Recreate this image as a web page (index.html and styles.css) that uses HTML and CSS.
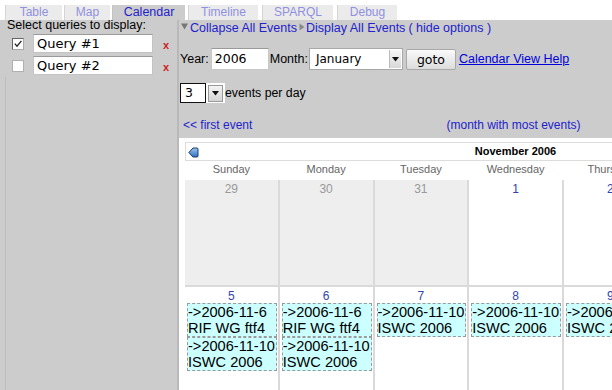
FILE: index.html
```html
<!DOCTYPE html>
<html>
<head>
<meta charset="utf-8">
<link rel="stylesheet" href="styles.css">
</head>
<body>
<div class="tabs">
  <div class="tab w-table">Table</div>
  <div class="tab w-map">Map</div>
  <div class="tab active w-cal">Calendar</div>
  <div class="tab w-time">Timeline</div>
  <div class="tab w-sparql">SPARQL</div>
  <div class="tab w-debug">Debug</div>
</div>
<div class="main">
  <div class="side">
    <div class="side-title">Select queries to display:</div>
    <div class="qrow first">
      <span class="cb checked"><svg width="10" height="10" viewBox="0 0 10 10"><path d="M1.8 4.6 L4 7.2 L8.4 1.8" fill="none" stroke="#222" stroke-width="1.3"/></svg></span>
      <div class="qinput">Query #1</div>
      <span class="del">x</span>
    </div>
    <div class="qrow">
      <span class="cb"></span>
      <div class="qinput">Query #2</div>
      <span class="del">x</span>
    </div>
    <div class="side-list"></div>
  </div>
  <div class="content">
    <div class="options">
      <div class="toggles">
        <svg class="tri-down" width="7" height="7" viewBox="0 0 7 7"><polygon points="0,0.5 7,0.5 3.5,6.5" fill="#777"/></svg>
        <span class="lnk">Collapse All Events</span>
        <svg class="tri-right" width="6" height="8" viewBox="0 0 6 8"><polygon points="0.5,0.5 5.5,4 0.5,7.5" fill="#888"/></svg>
        <span class="lnk">Display All Events</span>
        <span class="lnk gap">( hide options )</span>
      </div>
      <div class="form-row">
        <span class="lbl">Year:</span>
        <div class="year-input">2006</div>
        <span class="lbl month-lbl">Month:</span>
        <div class="select month-select">
          <span class="sel-text">January</span>
          <span class="sel-btn"><svg width="7" height="5" viewBox="0 0 7 5"><polygon points="0,0 7,0 3.5,4.5" fill="#111"/></svg></span>
        </div>
        <div class="goto">goto</div>
        <span class="help">Calendar View Help</span>
      </div>
      <div class="epd-row">
        <div class="epd-select">
          <span class="epd-text">3</span>
          <span class="epd-btn"><svg width="7" height="5" viewBox="0 0 7 5"><polygon points="0,0 7,0 3.5,4.5" fill="#111"/></svg></span>
        </div>
        <span class="epd-lbl">events per day</span>
      </div>
      <div class="nav-row">
        <span class="lnk">&lt;&lt; first event</span>
        <span class="lnk">(month with most events)</span>
        <span></span>
      </div>
    </div>
    <div class="calendar">
      <div class="cal-head">
        <svg class="prev" width="11" height="11" viewBox="0 0 11 11">
          <defs><linearGradient id="g" x1="0" y1="0" x2="0" y2="1"><stop offset="0" stop-color="#9cc6ef"/><stop offset="1" stop-color="#2f6fbf"/></linearGradient></defs>
          <path d="M0.8 5.5 L5 1 L9 1 Q10 1 10 2 L10 9 Q10 10 9 10 L5 10 Z" fill="url(#g)" stroke="#1b3d6b" stroke-width="1"/>
        </svg>
        <span class="cal-title">November 2006</span>
        <span></span>
      </div>
      <div class="dow">
        <span>Sunday</span><span>Monday</span><span>Tuesday</span><span>Wednesday</span><span>Thursday</span><span>Friday</span><span>Saturday</span>
      </div>
      <div class="grid">
        <div class="cell other"><div class="num">29</div></div>
        <div class="cell other"><div class="num">30</div></div>
        <div class="cell other"><div class="num">31</div></div>
        <div class="cell"><div class="num">1</div></div>
        <div class="cell"><div class="num">2</div></div>
        <div class="cell"><div class="num">3</div></div>
        <div class="cell"><div class="num">4</div></div>

        <div class="cell"><div class="num">5</div>
          <div class="ev">-&gt;2006-11-6<br>RIF WG ftf4</div>
          <div class="ev">-&gt;2006-11-10<br>ISWC 2006</div>
        </div>
        <div class="cell"><div class="num">6</div>
          <div class="ev">-&gt;2006-11-6<br>RIF WG ftf4</div>
          <div class="ev">-&gt;2006-11-10<br>ISWC 2006</div>
        </div>
        <div class="cell"><div class="num">7</div>
          <div class="ev">-&gt;2006-11-10<br>ISWC 2006</div>
        </div>
        <div class="cell"><div class="num">8</div>
          <div class="ev">-&gt;2006-11-10<br>ISWC 2006</div>
        </div>
        <div class="cell"><div class="num">9</div>
          <div class="ev">-&gt;2006-11-10<br>ISWC 2006</div>
        </div>
        <div class="cell"><div class="num">10</div>
          <div class="ev">-&gt;2006-11-10<br>ISWC 2006</div>
        </div>
        <div class="cell"><div class="num">11</div></div>
      </div>
    </div>
  </div>
</div>
</body>
</html>
```

FILE: styles.css
```css
html, body {
  margin: 0;
  padding: 0;
  width: 612px;
  height: 390px;
  overflow: hidden;
  background: #fff;
  font-family: "Liberation Sans", Arial, Helvetica, sans-serif;
  font-size: 12px;
  color: #000;
}

/* tabs */
.tabs {
  display: flex;
  height: 20px;
  padding: 5px 0 0 5px;
  box-sizing: border-box;
}
.tab {
  height: 15px;
  line-height: 15px;
  text-align: center;
  background: #ebebeb;
  color: #9090e0;
  border-left: 1px solid #d4d4d4;
  box-sizing: border-box;
  font-size: 12px;
}
.tab.active {
  background: #cccccc;
  color: #2222cc;
  border-left-color: #c4c4c4;
  font-size: 12.5px;
}
.w-table { width: 57px; margin-right: 2px; }
.w-map { width: 46px; margin-right: 2px; }
.w-cal { width: 73px; margin-right: 3px; }
.w-time { width: 70px; margin-right: 4px; }
.w-sparql { width: 71px; margin-right: 4px; }
.w-debug { width: 60px; }

/* main */
.main {
  display: flex;
  height: 370px;
}
.side {
  width: 177px;
  flex: none;
  background: #cccccc;
  border-right: 2px solid #b9b9b9;
  display: flex;
  flex-direction: column;
}
.side-title {
  padding-left: 7px;
  line-height: 14px;
  margin-top: -2px;
  font-size: 12.5px;
}
.qrow {
  display: flex;
  align-items: center;
  height: 19px;
  padding-left: 12px;
  margin-top: 3px;
}
.qrow.first { margin-top: 2px; }
.cb {
  width: 12px;
  height: 12px;
  box-sizing: border-box;
  background: #fff;
  border: 1px solid #b0b0b0;
  margin-right: 9px;
  display: flex;
  align-items: center;
  justify-content: center;
}
.cb.checked {
  border-color: #666 #aaa #aaa #666;
}
.qinput {
  width: 120px;
  height: 19px;
  box-sizing: border-box;
  background: #fff;
  border: 1px solid #c4c4c4;
  border-top-color: #9a9a9a;
  padding-left: 3px;
  font-family: "DejaVu Sans", sans-serif;
  font-size: 13px;
  line-height: 17px;
}
.del {
  margin-left: 10px;
  color: #cc2222;
  font-weight: bold;
  font-size: 11px;
  line-height: 12px;
  margin-top: 3px;
}
.side-list {
  flex: 1;
  margin: 2px 0 0 5px;
  border-left: 1px solid #bdbdbd;
}

/* content */
.content {
  flex: 1;
  min-width: 0;
  overflow: hidden;
  display: flex;
  flex-direction: column;
}
.options {
  height: 118px;
  flex: none;
  background: #cccccc;
}
.lnk { color: #2222cc; }
.toggles {
  display: flex;
  align-items: center;
  height: 16px;
  padding-left: 2px;
  font-size: 12.5px;
}
.tri-down { margin-right: 2px; margin-top: -3px; }
.tri-right { margin: -2px 1px 0 2px; }
.gap { margin-left: 3px; }

.form-row {
  display: flex;
  align-items: center;
  height: 22px;
  margin-top: 12px;
  padding-left: 1px;
  font-size: 12.5px;
}
.year-input {
  width: 58px;
  height: 22px;
  box-sizing: border-box;
  margin-left: 2px;
  background: #fff;
  border: 1px solid #c8c8c8;
  border-top-color: #9a9a9a;
  padding-left: 3px;
  font-family: "DejaVu Sans", sans-serif;
  font-size: 12.5px;
  line-height: 20px;
}
.month-lbl { margin-left: 1px; }
.select {
  display: flex;
  align-items: center;
  box-sizing: border-box;
  background: #fff;
}
.month-select {
  width: 94px;
  height: 22px;
  margin-left: 1px;
  border: 1px solid #a8a8a8;
}
.sel-text {
  flex: 1;
  padding-left: 6px;
  font-family: "DejaVu Sans", sans-serif;
  font-size: 12px;
}
.sel-btn {
  width: 12px;
  height: 18px;
  margin-right: 1px;
  box-sizing: border-box;
  border-left: 1px solid #bbb;
  background: linear-gradient(#f6f6f6, #d8d8d8);
  display: flex;
  align-items: center;
  justify-content: center;
}
.goto {
  width: 50px;
  height: 21px;
  margin-left: 3px;
  box-sizing: border-box;
  border: 1px solid #a9a9a9;
  border-radius: 2px;
  background: linear-gradient(#fafafa, #dcdcdc);
  text-align: center;
  font-family: "DejaVu Sans", sans-serif;
  font-size: 12.5px;
  line-height: 19px;
}
.help {
  margin-left: 3px;
  color: #0000dd;
  text-decoration: underline;
}

.epd-row {
  display: flex;
  align-items: center;
  height: 20px;
  margin-top: 13px;
  padding-left: 1px;
}
.epd-select {
  display: flex;
  align-items: center;
  width: 45px;
  height: 20px;
  background: #fff;
}
.epd-text {
  width: 26px;
  height: 20px;
  box-sizing: border-box;
  border: 1px solid #111;
  padding-left: 4px;
  font-family: "DejaVu Sans", sans-serif;
  font-size: 12.5px;
  line-height: 18px;
}
.epd-btn {
  width: 15px;
  height: 17px;
  margin-left: 2px;
  box-sizing: border-box;
  border: 1px solid #999;
  background: linear-gradient(#f4f4f4, #d4d4d4);
  display: flex;
  align-items: center;
  justify-content: center;
}
.epd-lbl { margin-left: 0; font-size: 12.3px; }

.nav-row {
  display: grid;
  grid-template-columns: 1fr auto 1fr;
  width: 661px;
  margin-top: 14px;
  padding-left: 4px;
  line-height: 16px;
}

/* calendar */
.calendar {
  flex: 1;
  background: #fff;
  padding: 4px 0 0 6px;
}
.cal-head {
  display: grid;
  grid-template-columns: 1fr auto 1fr;
  align-items: center;
  width: 661px;
  height: 19px;
  box-sizing: border-box;
  border: 1px solid #dcdcdc;
}
.prev { margin-left: 2px; margin-top: 1px; }
.cal-title {
  font-weight: bold;
  font-size: 11px;
  line-height: 17px;
}
.dow {
  display: grid;
  grid-template-columns: repeat(7, 92.75px);
  column-gap: 2px;
  height: 19px;
  line-height: 17px;
  font-size: 11px;
  color: #666;
  text-align: center;
}
.grid {
  display: grid;
  grid-template-columns: repeat(7, 92.75px);
  grid-template-rows: 105px 105px;
  gap: 2px;
  background: #dadada;
  width: 661.25px;
}
.cell {
  background: #fff;
  padding-top: 2px;
}
.cell.other { background: #eeeeee; }
.num {
  text-align: center;
  font-size: 12px;
  line-height: 14px;
  color: #3344aa;
}
.other .num { color: #999; }
.ev {
  margin: 0 1px 0 2px;
  border: 1px dashed #9a9a9a;
  background: #ccffff;
  font-size: 14.6px;
  line-height: 16px;
  white-space: nowrap;
  overflow: hidden;
}
```
